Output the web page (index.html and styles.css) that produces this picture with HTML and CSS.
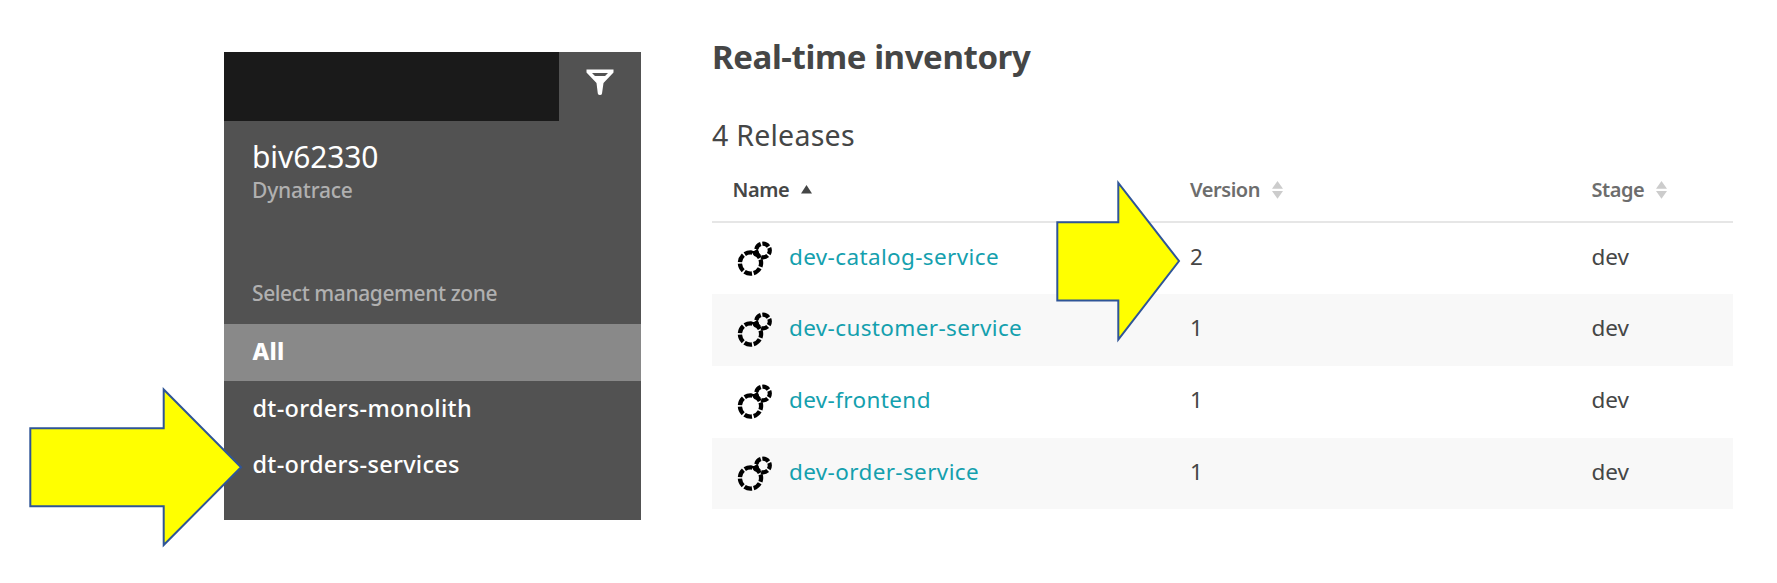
FILE: index.html
```html
<!DOCTYPE html>
<html lang="en">
<head>
<meta charset="utf-8">
<title>Real-time inventory</title>
<link rel="stylesheet" href="styles.css">
</head>
<body>
<svg class="defs" width="0" height="0">
  <symbol id="rings" viewBox="0 0 38 38">
    <g fill="none" stroke="#000">
      <circle cx="26" cy="10.500" r="6.800" stroke-width="4.200" stroke-dasharray="6.9 1.64" stroke-dashoffset="3"/>
      <circle cx="13.500" cy="23" r="10.600" stroke-width="4.300" stroke-dasharray="7.8 1.714" stroke-dashoffset="4"/>
    </g>
    <path d="M13.500 11l4 0 3-2.500 2.500 7-5 1z"/>
  </symbol>
  <symbol id="sort" viewBox="0 0 11 18">
    <path fill="#ccc" d="M5.500 0L11 7.700H0zM0 10h11L5.500 17.700z"/>
  </symbol>
</svg>
<main class="page">
  <aside class="panel">
    <div class="topbar">
      <div class="topbar-dark"></div>
      <div class="filter">
        <svg width="28" height="27" viewBox="0 0 28 27"><path fill="#fff" fill-rule="evenodd" d="M.500.500H27.500V3.500L17.500 14 16 24.500Q15.800 26 14 26T11.800 24.500L10.500 14 .500 3.500zM6 4L9 7H19L22 4z"/></svg>
      </div>
    </div>
    <div class="env">biv62330</div>
    <div class="vendor">Dynatrace</div>
    <div class="label">Select management zone</div>
    <ul class="zones">
      <li class="zone selected">All</li>
      <li class="zone">dt-orders-monolith</li>
      <li class="zone">dt-orders-services</li>
    </ul>
  </aside>
  <section class="inventory">
    <h1 class="title">Real-time inventory</h1>
    <h2 class="count">4 Releases</h2>
    <div class="table">
      <div class="row head">
        <div class="cell name active">Name<svg class="asc" width="11" height="9" viewBox="0 0 11 9"><path fill="#454646" d="M5.500 0L11 8.500H0z"/></svg></div>
        <div class="cell version">Version<svg class="sort" width="11" height="18"><use href="#sort"/></svg></div>
        <div class="cell stage">Stage<svg class="sort" width="11" height="18"><use href="#sort"/></svg></div>
      </div>
      <div class="row"><div class="cell name"><svg class="rings" width="38" height="38"><use href="#rings"/></svg><a class="link">dev-catalog-service</a></div><div class="cell version">2</div><div class="cell stage">dev</div></div>
      <div class="row alt"><div class="cell name"><svg class="rings" width="38" height="38"><use href="#rings"/></svg><a class="link">dev-customer-service</a></div><div class="cell version">1</div><div class="cell stage">dev</div></div>
      <div class="row"><div class="cell name"><svg class="rings" width="38" height="38"><use href="#rings"/></svg><a class="link">dev-frontend</a></div><div class="cell version">1</div><div class="cell stage">dev</div></div>
      <div class="row alt"><div class="cell name"><svg class="rings" width="38" height="38"><use href="#rings"/></svg><a class="link">dev-order-service</a></div><div class="cell version">1</div><div class="cell stage">dev</div></div>
    </div>
  </section>
</main>
<svg class="arrows" width="1777" height="583" viewBox="0 0 1777 583">
  <g fill="#ff0" stroke="#2f5597" stroke-width="2">
    <path d="M30.300 428.300H163.700V389.500L241 467.300 163.700 545V506.300H30.300z"/>
    <path d="M1057.300 222.200H1118.300V183L1179 261 1118.300 339.500V300.500H1057.300z"/>
  </g>
</svg>
</body>
</html>
```
FILE: styles.css
```css
* { box-sizing: border-box; }
body { margin: 0; background: #fff; font-family: "Noto Sans", sans-serif; }
.defs { position: absolute; }
.page { display: flex; width: 1777px; height: 583px; overflow: hidden; }

.panel { width: 416.5px; height: 468px; margin: 52px 0 0 224px; background: #525252; color: #fff; flex: none; }
.topbar { display: flex; height: 68.5px; }
.topbar-dark { width: 335px; background: #1a1a1a; }
.filter { flex: 1; padding: 17px 0 0 27px; }
.filter svg { display: block; }
.env { padding-left: 28px; margin-top: 16px; font-size: 30px; line-height: 40px; letter-spacing: -0.1px; }
.vendor { padding-left: 28px; font-size: 21px; line-height: 26px; letter-spacing: -0.2px; font-weight: 500; color: #b0b0b0; }
.label { padding-left: 28px; margin-top: 76px; height: 45.5px; font-size: 21px; line-height: 29.5px; letter-spacing: -0.4px; font-weight: 500; color: #b0b0b0; }
.zones { list-style: none; margin: 0; padding: 0; }
.zone { height: 56.7px; line-height: 54.5px; padding-left: 28.5px; font-size: 23.5px; font-weight: 500; letter-spacing: 0.3px; }
.zone.selected { background: #898989; font-weight: 800; }

.inventory { width: 1021px; margin-left: 71.5px; padding-top: 34px; flex: none; color: #454646; }
.title { margin: 0; font-size: 33px; line-height: 46px; font-weight: 700; letter-spacing: -0.4px; }
.count { margin: 35px 0 0; font-size: 28.5px; line-height: 40px; font-weight: 400; letter-spacing: 0.25px; }
.table { margin-top: 12.5px; }
.row { display: grid; grid-template-columns: 478px 401.5px 1fr; height: 71.7px; font-size: 22.5px; line-height: 68.6px; }
.row.head { height: 55px; border-bottom: 2px solid #e6e6e6; font-size: 20px; font-weight: 600; line-height: 44px; letter-spacing: -0.45px; color: #6d6d6d; }
.row.alt { background: #f8f8f8; }
.cell { display: flex; }
.head .name { padding-left: 20.5px; color: #454646; }
.asc { margin: 17px 0 0 11.5px; }
.sort { margin: 13px 0 0 11.5px; }
.rings { margin: 17px 14.5px 0 24.5px; }
.link { color: #14a0ae; letter-spacing: 0.37px; }
.arrows { position: absolute; left: 0; top: 0; }
```
